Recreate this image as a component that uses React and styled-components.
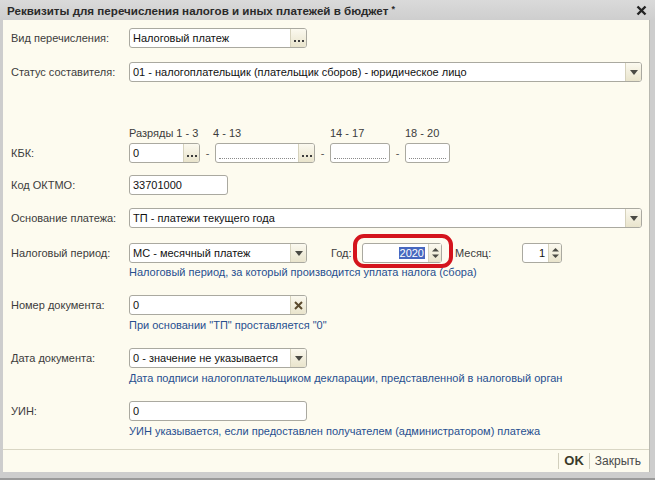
import React from 'react';
import styled, { createGlobalStyle } from 'styled-components';

const Global = createGlobalStyle`
  html, body { margin: 0; padding: 0; background: #fff; }
  body { font-family: 'Liberation Sans', Arial, sans-serif; font-size: 11px; color: #333; }
`;

const Window = styled.div`
  width: 655px;
  height: 480px;
  box-sizing: border-box;
  display: flex;
  flex-direction: column;
  background: #cdcdcd;
  border-bottom: 2px solid #9a9a9a;
`;

const TitleBar = styled.div`
  height: 20px;
  flex: none;
  display: flex;
  align-items: center;
  justify-content: space-between;
  padding: 0 8px 0 7px;
  background: linear-gradient(#dadada, #cecece);
  font-weight: bold;
  font-size: 11.6px;
  color: #2a2a2a;
`;

const Star = styled.sup`
  font-size: 9px;
  vertical-align: 3px;
  line-height: 0;
`;

const Frame = styled.div`
  flex: 1;
  display: flex;
  flex-direction: column;
  margin: 0 5px 6px 3px;
  background: #fdfbef;
  border-right: 1px solid #b8b8b0;
`;

const Content = styled.div`
  display: flex;
  flex-direction: column;
  padding-left: 8px;
`;

const Row = styled.div`
  display: flex;
  align-items: flex-start;
  margin-top: ${(p) => p.$mt}px;
`;

const Label = styled.div`
  width: 118px;
  flex: none;
  line-height: 20px;
  padding-top: ${(p) => p.$pt || 0}px;
  color: #3c3c3c;
  white-space: nowrap;
`;

const Field = styled.div`
  display: flex;
  flex-direction: column;
`;

const InputBox = styled.div`
  position: relative;
  width: ${(p) => p.$w}px;
  height: 20px;
  box-sizing: border-box;
  border: 1px solid #aaa9a0;
  border-radius: 3px;
  background: #fff;
  display: flex;
  align-items: stretch;
  overflow: ${(p) => (p.$visible ? 'visible' : 'hidden')};
  flex: none;
`;

const Value = styled.span`
  flex: 1;
  padding: 0 3px;
  line-height: 18px;
  color: #111;
  white-space: nowrap;
  overflow: hidden;
  text-align: ${(p) => (p.$right ? 'right' : 'left')};
`;

const Empty = styled.span`
  flex: 1;
  margin: 0 3px 3px 3px;
  border-bottom: 1px dotted #8a8a8a;
`;

const Selected = styled.span`
  background: #4768bf;
  color: #fff;
  padding: 0 1px;
`;

const SideBtn = styled.span`
  width: ${(p) => p.$w || 16}px;
  flex: none;
  border-left: 1px solid #d6d2bd;
  background: linear-gradient(#fbf9ef, #e9e4cc);
  display: flex;
  align-items: ${(p) => (p.$bottom ? 'flex-end' : 'center')};
  justify-content: center;
  padding-bottom: ${(p) => (p.$bottom ? 4 : 0)}px;
  box-sizing: border-box;
`;

const Hint = styled.div`
  margin-top: ${(p) => p.$mt || 4}px;
  line-height: 13px;
  color: #274f8f;
  white-space: nowrap;
`;

const KbkGroup = styled.div`
  display: flex;
  align-items: flex-end;
`;

const KbkSeg = styled.div`
  display: flex;
  flex-direction: column;
  gap: 3px;
`;

const KbkHead = styled.div`
  line-height: 13px;
  color: #3c3c3c;
  white-space: nowrap;
  margin-left: ${(p) => p.$ml || 0}px;
`;

const Dash = styled.span`
  width: ${(p) => p.$w}px;
  text-align: center;
  line-height: 20px;
  color: #555;
`;

const InlineLabel = styled.span`
  width: ${(p) => p.$w}px;
  margin-left: ${(p) => p.$ml}px;
  flex: none;
  line-height: 20px;
  color: #3c3c3c;
  white-space: nowrap;
`;

const Highlight = styled.span`
  position: absolute;
  left: -10px;
  right: -12px;
  top: -10px;
  bottom: -6px;
  border: 4px solid #d4141d;
  border-radius: 11px;
  pointer-events: none;
`;

const Footer = styled.div`
  margin-top: auto;
  height: 22px;
  border-top: 1px solid #d9d6c4;
  display: flex;
  justify-content: flex-end;
  align-items: center;
  padding-right: 8px;
`;

const FootBtn = styled.span`
  border-left: 1px solid #d2cfbd;
  padding: 0 0 0 5px;
  margin-left: 5px;
  line-height: 16px;
  font-size: ${(p) => (p.$bold ? 13 : 12)}px;
  font-weight: ${(p) => (p.$bold ? 'bold' : 'normal')};
  color: ${(p) => (p.$bold ? '#3a3a2a' : '#4a4a4a')};
`;

const Dots = () => (
  <svg width="10" height="3" viewBox="0 0 10 3">
    <rect x="0" y="0" width="2" height="2" fill="#3d3d3d" />
    <rect x="4" y="0" width="2" height="2" fill="#3d3d3d" />
    <rect x="8" y="0" width="2" height="2" fill="#3d3d3d" />
  </svg>
);

const Arrow = () => (
  <svg width="8" height="5" viewBox="0 0 8 5">
    <polygon points="0,0 8,0 4,5" fill="#4a4a44" />
  </svg>
);

const Cross = () => (
  <svg width="9" height="9" viewBox="0 0 9 9">
    <path d="M1 1 L8 8 M8 1 L1 8" stroke="#5b4a2e" strokeWidth="2" />
  </svg>
);

const Spin = () => (
  <svg width="7" height="12" viewBox="0 0 7 12">
    <polygon points="3.5,1 7,4.5 0,4.5" fill="#4a4a44" />
    <polygon points="0,7.5 7,7.5 3.5,11" fill="#4a4a44" />
  </svg>
);

const Close = () => (
  <svg width="11" height="11" viewBox="0 0 11 11">
    <path d="M1.5 1.5 L9.5 9.5 M9.5 1.5 L1.5 9.5" stroke="#222" strokeWidth="2.4" />
  </svg>
);

export default function App() {
  return (
    <>
      <Global />
      <Window>
        <TitleBar>
          <span>Реквизиты для перечисления налогов и иных платежей в бюджет <Star>*</Star></span>
          <Close />
        </TitleBar>
        <Frame>
          <Content>
            <Row $mt={8}>
              <Label>Вид перечисления:</Label>
              <InputBox $w={178}>
                <Value>Налоговый платеж</Value>
                <SideBtn $bottom><Dots /></SideBtn>
              </InputBox>
            </Row>

            <Row $mt={14}>
              <Label>Статус составителя:</Label>
              <InputBox $w={513}>
                <Value>01 - налогоплательщик (плательщик сборов) - юридическое лицо</Value>
                <SideBtn><Arrow /></SideBtn>
              </InputBox>
            </Row>

            <Row $mt={45}>
              <Label $pt={16}>КБК:</Label>
              <KbkGroup>
                <KbkSeg>
                  <KbkHead>Разряды 1 - 3</KbkHead>
                  <InputBox $w={71}>
                    <Value>0</Value>
                    <SideBtn $bottom><Dots /></SideBtn>
                  </InputBox>
                </KbkSeg>
                <Dash $w={15}>-</Dash>
                <KbkSeg>
                  <KbkHead $ml={-2}>4 - 13</KbkHead>
                  <InputBox $w={100}>
                    <Empty />
                    <SideBtn $bottom><Dots /></SideBtn>
                  </InputBox>
                </KbkSeg>
                <Dash $w={15}>-</Dash>
                <KbkSeg>
                  <KbkHead>14 - 17</KbkHead>
                  <InputBox $w={60}>
                    <Empty />
                  </InputBox>
                </KbkSeg>
                <Dash $w={15}>-</Dash>
                <KbkSeg>
                  <KbkHead>18 - 20</KbkHead>
                  <InputBox $w={45}>
                    <Empty />
                  </InputBox>
                </KbkSeg>
              </KbkGroup>
            </Row>

            <Row $mt={12}>
              <Label>Код ОКТМО:</Label>
              <InputBox $w={99}>
                <Value>33701000</Value>
              </InputBox>
            </Row>

            <Row $mt={13}>
              <Label>Основание платежа:</Label>
              <InputBox $w={513}>
                <Value>ТП - платежи текущего года</Value>
                <SideBtn><Arrow /></SideBtn>
              </InputBox>
            </Row>

            <Row $mt={15}>
              <Label>Налоговый период:</Label>
              <Field>
                <Row $mt={0}>
                  <InputBox $w={178}>
                    <Value>МС - месячный платеж</Value>
                    <SideBtn><Arrow /></SideBtn>
                  </InputBox>
                  <InlineLabel $w={31} $ml={24}>Год:</InlineLabel>
                  <InputBox $w={80} $visible>
                    <Value $right><Selected>2020</Selected></Value>
                    <SideBtn $w={13}><Spin /></SideBtn>
                    <Highlight />
                  </InputBox>
                  <InlineLabel $w={67} $ml={13}>Месяц:</InlineLabel>
                  <InputBox $w={40}>
                    <Value $right>1</Value>
                    <SideBtn $w={13}><Spin /></SideBtn>
                  </InputBox>
                </Row>
                <Hint $mt={3}>Налоговый период, за который производится уплата налога (сбора)</Hint>
              </Field>
            </Row>

            <Row $mt={16}>
              <Label>Номер документа:</Label>
              <Field>
                <InputBox $w={178}>
                  <Value>0</Value>
                  <SideBtn><Cross /></SideBtn>
                </InputBox>
                <Hint>При основании "ТП" проставляется "0"</Hint>
              </Field>
            </Row>

            <Row $mt={16}>
              <Label>Дата документа:</Label>
              <Field>
                <InputBox $w={178}>
                  <Value>0 - значение не указывается</Value>
                  <SideBtn><Arrow /></SideBtn>
                </InputBox>
                <Hint>Дата подписи налогоплательщиком декларации, представленной в налоговый орган</Hint>
              </Field>
            </Row>

            <Row $mt={16}>
              <Label>УИН:</Label>
              <Field>
                <InputBox $w={178}>
                  <Value>0</Value>
                </InputBox>
                <Hint>УИН указывается, если предоставлен получателем (администратором) платежа</Hint>
              </Field>
            </Row>
          </Content>
          <Footer>
            <FootBtn $bold>OK</FootBtn>
            <FootBtn>Закрыть</FootBtn>
          </Footer>
        </Frame>
      </Window>
    </>
  );
}
